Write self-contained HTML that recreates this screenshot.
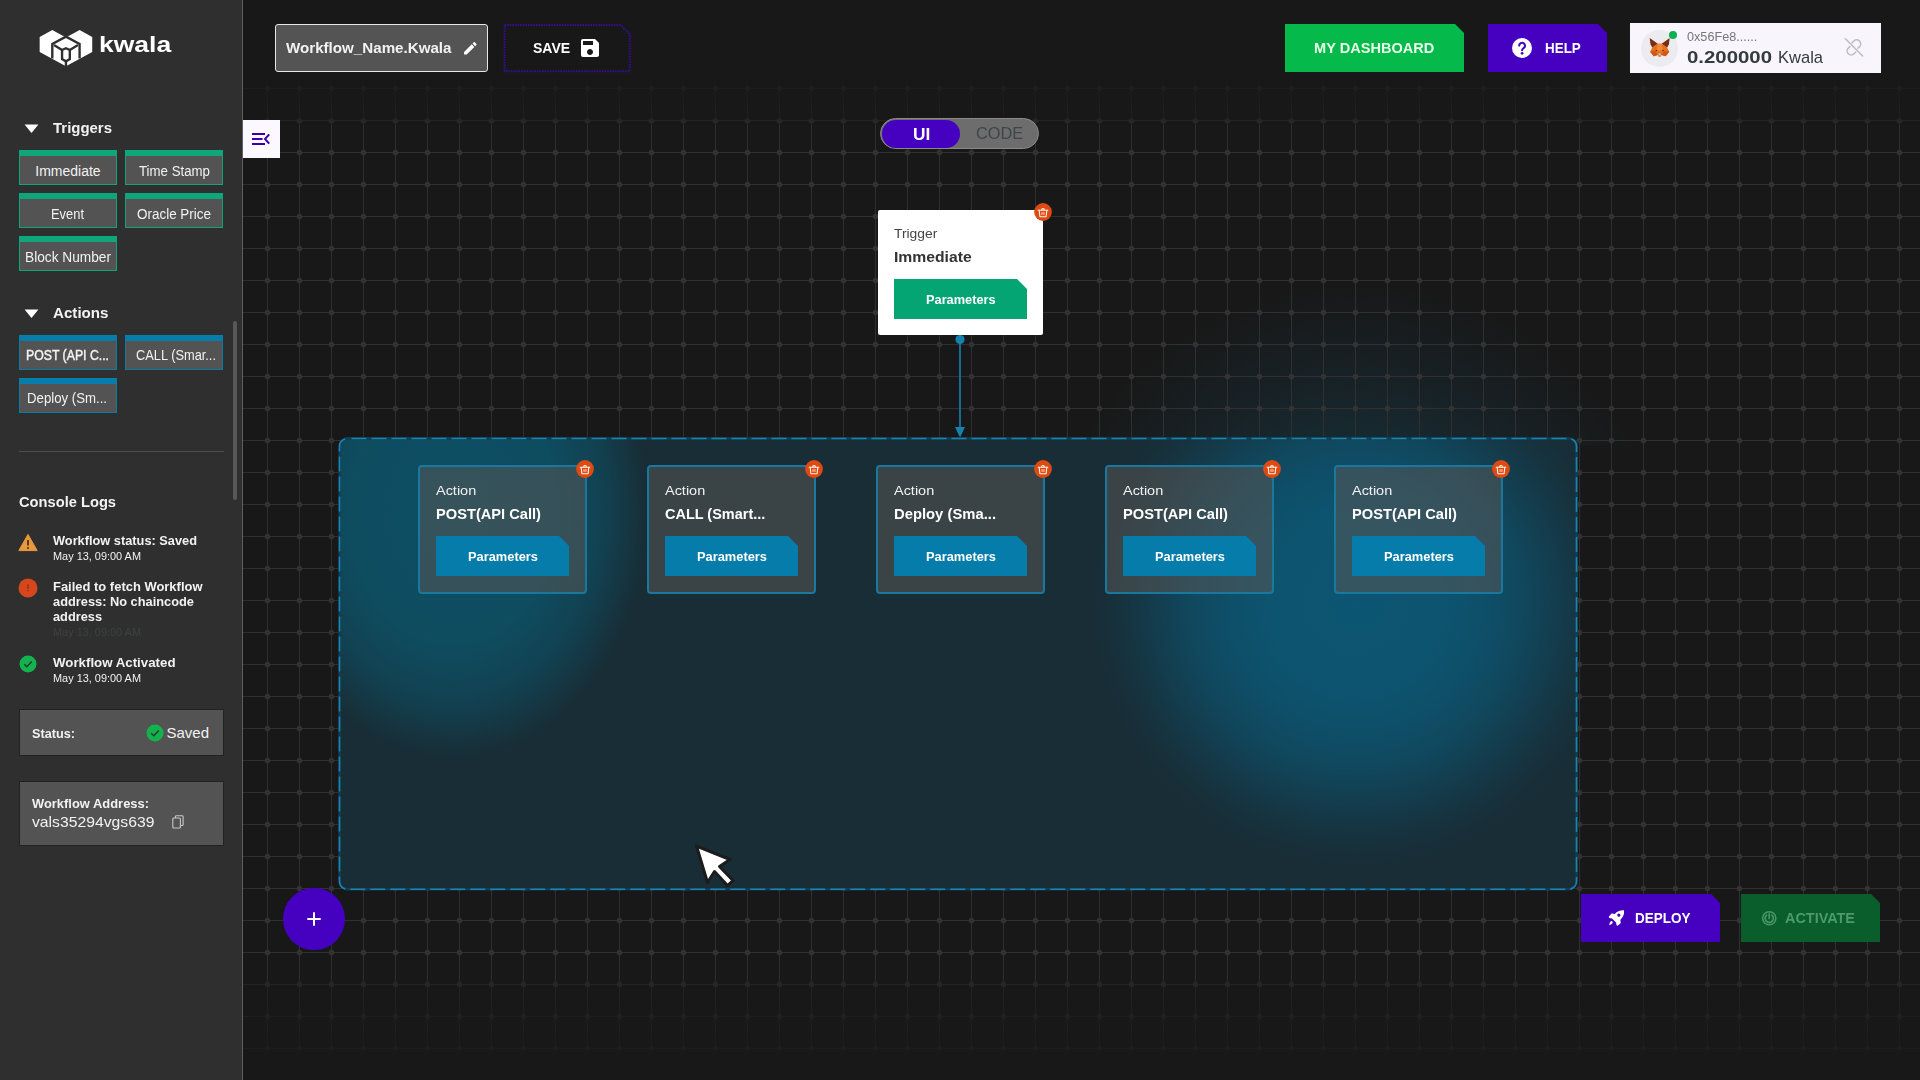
<!DOCTYPE html>
<html lang="en"><head><meta charset="utf-8"><title>Kwala Workflow Builder</title>
<style>
*{box-sizing:border-box;margin:0;padding:0}
html,body{width:1920px;height:1080px;overflow:hidden;background:#181818}
body{position:relative;font-family:"Liberation Sans",sans-serif;color:#fff}
.a{position:absolute}
.t{position:absolute;white-space:nowrap;line-height:1;transform-origin:0 50%}
#grid{left:0;top:0;width:1920px;height:1080px;
 -webkit-mask-image:linear-gradient(to bottom,transparent 72px,rgba(0,0,0,.24) 87px,rgba(0,0,0,.3) 118px,rgba(0,0,0,.6) 121px,#000 127px,#000 978px,rgba(0,0,0,.5) 983px,rgba(0,0,0,.33) 1013px,rgba(0,0,0,.24) 1046px,transparent 1064px);
 mask-image:linear-gradient(to bottom,transparent 72px,rgba(0,0,0,.24) 87px,rgba(0,0,0,.3) 118px,rgba(0,0,0,.6) 121px,#000 127px,#000 978px,rgba(0,0,0,.5) 983px,rgba(0,0,0,.33) 1013px,rgba(0,0,0,.24) 1046px,transparent 1064px)}
#side{left:0;top:0;width:243px;height:1080px;background:#2f2f2f;border-right:1px solid #606060}
.pb{position:absolute;width:98px;height:35px;background:#535353;border:1px solid #10a47b;border-top:6px solid #0fa67c}
.pb.b{border-color:#0a7aa6;border-top-color:#067dab}
.notch{clip-path:polygon(0 0,calc(100% - 9px) 0,100% 9px,100% 100%,0 100%)}
.card{position:absolute;width:168.5px;height:128.5px;top:465px;background:rgba(88,85,83,.55);border:2px solid #1a779d;border-radius:4px}
.pbtn{position:absolute;width:133px;height:40px;background:#067cab;clip-path:polygon(0 0,calc(100% - 10px) 0,100% 10px,100% 100%,0 100%)}
.del{position:absolute;width:18px;height:18px}
.sbox{position:absolute;left:19px;width:205px;background:#535353;border:1px solid #222}
</style></head><body>
<div class="a" style="left:1036px;top:285px;width:640px;height:640px;clip-path:inset(0 0 480px 0);background:radial-gradient(circle closest-side at 50% 50%,rgba(20,90,120,.4) 0,rgba(20,90,120,.3) 45%,rgba(20,90,120,.12) 75%,rgba(20,90,120,0) 100%)"></div>
<svg id="grid" class="a" width="1920" height="1080"><defs><pattern id="gp" x="-5" y="8" width="32" height="32" patternUnits="userSpaceOnUse"><path d="M16.5 0V32M0 16.5H32" stroke="#303030" stroke-width="1" fill="none"/><circle cx="16.5" cy="16.5" r="2.7" fill="#333"/></pattern></defs><rect x="243" y="0" width="1677" height="1080" fill="url(#gp)"/></svg>
<svg class="a" style="left:950px;top:330px" width="20" height="112"><circle cx="10" cy="9.5" r="4.6" fill="#1482b0"/><path d="M10 10V100" stroke="#1482b0" stroke-width="1.6"/><path d="M5 97H15L10 107.5Z" fill="#1482b0"/></svg>
<div class="a" style="left:338.5px;top:437px;width:1239px;height:452.6px;border-radius:9px;background-color:#182d36;background-image:radial-gradient(ellipse 198px 250px at 114px 74px,rgba(10,90,114,.74) 0,rgba(10,90,114,.7) 52%,rgba(10,90,114,.47) 75%,rgba(10,90,114,.2) 89%,rgba(10,90,114,.05) 96%,rgba(10,90,114,0) 100%),radial-gradient(circle at 1017px 165px,rgba(11,90,121,.9) 0,rgba(11,90,121,.86) 90px,rgba(11,90,121,.75) 130px,rgba(11,90,121,.6) 165px,rgba(11,90,121,.36) 200px,rgba(11,90,121,.14) 232px,rgba(11,90,121,.03) 255px,rgba(11,90,121,0) 270px)"></div>
<svg class="a" style="left:336px;top:434.5px" width="1244" height="459"><rect x="3.5" y="3.5" width="1237" height="450.8" rx="8" ry="8" fill="none" stroke="#0e3f56" stroke-width="2.4"/><rect x="3.5" y="3.5" width="1237" height="450.8" rx="8" ry="8" fill="none" stroke="#1d82ad" stroke-width="1.6" stroke-dasharray="15 5" stroke-dashoffset="-4"/></svg>
<div class="a" style="left:878px;top:209.5px;width:165px;height:125.5px;background:#fff;border-radius:2px"></div>
<div class="pbtn" style="left:894px;top:279px;background:#05a473"></div>
<svg class="del" style="left:1034px;top:202.5px" viewBox="0 0 18 18"><circle cx="9" cy="9" r="8.9" fill="#df4a14"/><g fill="none" stroke="#fff4e6" stroke-width="1.1" stroke-linecap="round" stroke-linejoin="round"><path d="M4.2 7.2h9.6"/><path d="M7.6 7a1.4 1.4 0 0 1 2.8 0"/><path d="M5.2 7.4l.7 6.4h6.2l.7-6.4"/></g><rect x="7.2" y="9.2" width="3.6" height="2.6" fill="#ffb59a" opacity=".8"/></svg>
<div class="card" style="left:418.0px"></div>
<div class="pbtn" style="left:436.0px;top:536px"></div>
<svg class="del" style="left:576.0px;top:460px" viewBox="0 0 18 18"><circle cx="9" cy="9" r="8.9" fill="#df4a14"/><g fill="none" stroke="#fff4e6" stroke-width="1.1" stroke-linecap="round" stroke-linejoin="round"><path d="M4.2 7.2h9.6"/><path d="M7.6 7a1.4 1.4 0 0 1 2.8 0"/><path d="M5.2 7.4l.7 6.4h6.2l.7-6.4"/></g><rect x="7.2" y="9.2" width="3.6" height="2.6" fill="#ffb59a" opacity=".8"/></svg>
<div class="card" style="left:647.0px"></div>
<div class="pbtn" style="left:665.0px;top:536px"></div>
<svg class="del" style="left:805.0px;top:460px" viewBox="0 0 18 18"><circle cx="9" cy="9" r="8.9" fill="#df4a14"/><g fill="none" stroke="#fff4e6" stroke-width="1.1" stroke-linecap="round" stroke-linejoin="round"><path d="M4.2 7.2h9.6"/><path d="M7.6 7a1.4 1.4 0 0 1 2.8 0"/><path d="M5.2 7.4l.7 6.4h6.2l.7-6.4"/></g><rect x="7.2" y="9.2" width="3.6" height="2.6" fill="#ffb59a" opacity=".8"/></svg>
<div class="card" style="left:876.0px"></div>
<div class="pbtn" style="left:894.0px;top:536px"></div>
<svg class="del" style="left:1034.0px;top:460px" viewBox="0 0 18 18"><circle cx="9" cy="9" r="8.9" fill="#df4a14"/><g fill="none" stroke="#fff4e6" stroke-width="1.1" stroke-linecap="round" stroke-linejoin="round"><path d="M4.2 7.2h9.6"/><path d="M7.6 7a1.4 1.4 0 0 1 2.8 0"/><path d="M5.2 7.4l.7 6.4h6.2l.7-6.4"/></g><rect x="7.2" y="9.2" width="3.6" height="2.6" fill="#ffb59a" opacity=".8"/></svg>
<div class="card" style="left:1105.0px"></div>
<div class="pbtn" style="left:1123.0px;top:536px"></div>
<svg class="del" style="left:1263.0px;top:460px" viewBox="0 0 18 18"><circle cx="9" cy="9" r="8.9" fill="#df4a14"/><g fill="none" stroke="#fff4e6" stroke-width="1.1" stroke-linecap="round" stroke-linejoin="round"><path d="M4.2 7.2h9.6"/><path d="M7.6 7a1.4 1.4 0 0 1 2.8 0"/><path d="M5.2 7.4l.7 6.4h6.2l.7-6.4"/></g><rect x="7.2" y="9.2" width="3.6" height="2.6" fill="#ffb59a" opacity=".8"/></svg>
<div class="card" style="left:1334.0px"></div>
<div class="pbtn" style="left:1352.0px;top:536px"></div>
<svg class="del" style="left:1492.0px;top:460px" viewBox="0 0 18 18"><circle cx="9" cy="9" r="8.9" fill="#df4a14"/><g fill="none" stroke="#fff4e6" stroke-width="1.1" stroke-linecap="round" stroke-linejoin="round"><path d="M4.2 7.2h9.6"/><path d="M7.6 7a1.4 1.4 0 0 1 2.8 0"/><path d="M5.2 7.4l.7 6.4h6.2l.7-6.4"/></g><rect x="7.2" y="9.2" width="3.6" height="2.6" fill="#ffb59a" opacity=".8"/></svg>
<div class="a" style="left:880px;top:118px;width:159px;height:31px;border-radius:16px;background:#6d6d6d;border:1.5px solid #8a8a8a"></div>
<div class="a" style="left:881.5px;top:119.5px;width:78.5px;height:28px;border-radius:14px;background:#4600c0"></div>
<div class="a" style="left:275px;top:24px;width:213px;height:48px;background:#545454;border:1.3px solid #e6e6e6;border-radius:3px"></div>
<svg class="a" style="left:461.6px;top:39.9px" width="16.67" height="16.67" viewBox="0 0 24 24"><path fill="#fff" d="M3 17.25V21h3.75L17.81 9.94l-3.75-3.75L3 17.25zM20.71 7.04c.39-.39.39-1.02 0-1.41l-2.34-2.34c-.39-.39-1.02-.39-1.41 0l-1.83 1.83 3.75 3.75 1.83-1.83z"/></svg>
<svg class="a" style="left:502px;top:22px" width="131" height="52"><path d="M2.6 3H118.6L127.8 12.2V49.3H2.6Z" fill="#181818" stroke="#350e94" stroke-width="2" stroke-dasharray="1.6 1"/></svg>
<svg class="a" style="left:578px;top:36px" width="24" height="24" viewBox="0 0 24 24"><path fill="#fff" d="M17 3H5c-1.11 0-2 .9-2 2v14c0 1.1.89 2 2 2h14c1.1 0 2-.9 2-2V7l-4-4zm-5 16c-1.66 0-3-1.34-3-3s1.34-3 3-3 3 1.34 3 3-1.34 3-3 3zm3-10H5V5h10v4z"/></svg>
<div class="a" style="left:243px;top:120px;width:37px;height:38px;background:#fbf8ff"></div>
<svg class="a" style="left:243px;top:120px" width="37" height="38"><g stroke="#3a00b0" stroke-width="1.8" fill="none"><path d="M9 14H22M9 19H19.5M9 24H22"/><path d="M26.2 14.3L22 19l4.2 4.7" stroke-width="2"/></g></svg>
<div class="a notch" style="left:1285px;top:24px;width:179px;height:48px;background:#05b94a"></div>
<div class="a notch" style="left:1488px;top:24px;width:119px;height:48px;background:#4600c0"></div>
<svg class="a" style="left:1511.8px;top:38px" width="20" height="20" viewBox="0 0 20 20"><circle cx="10" cy="10" r="10" fill="#fff"/><path d="M7.2 7.6a2.9 2.9 0 1 1 4.4 2.5c-1 .6-1.5 1.1-1.5 2.2" fill="none" stroke="#4600c0" stroke-width="2.1" stroke-linecap="round"/><circle cx="10.1" cy="15.3" r="1.35" fill="#4600c0"/></svg>
<div class="a" style="left:1630px;top:23px;width:251px;height:50px;background:#f8f6fc"></div>
<div class="a" style="left:1641px;top:30px;width:36.6px;height:36.6px;border-radius:50%;background:#ececf0"></div>
<svg class="a" style="left:1649px;top:38.3px" width="21.4" height="19.2" viewBox="0 0 21 19">
<path d="M.6 0L8.6 5.8 3.2 9.6 1.4 6.2Z" fill="#7a2d10"/><path d="M20.4 0L12.4 5.8 17.8 9.6 19.6 6.2Z" fill="#7a2d10"/>
<path d="M3.2 9.4L8.6 5.6H12.4L17.8 9.4 20 13.6 16.4 18 12.4 16.8 11.6 18.6H9.4L8.6 16.8 4.6 18 1 13.6Z" fill="#e4701c"/>
<path d="M8.6 5.6H12.4L13.4 11 10.5 13.4 7.6 11Z" fill="#f08a3a"/>
<path d="M1 13.6L6 12.8 8.6 16.8 4.6 18Z" fill="#d3541a"/><path d="M20 13.6L15 12.8 12.4 16.8 16.4 18Z" fill="#d3541a"/>
<path d="M9.4 15.2h2.2l.2 2.2H9.2Z" fill="#c9b9a8"/><circle cx="7.1" cy="12.5" r=".7" fill="#2a1a12"/><circle cx="13.9" cy="12.5" r=".7" fill="#2a1a12"/>
</svg>
<div class="a" style="left:1668.8px;top:30.8px;width:8.6px;height:8.6px;border-radius:50%;background:#0db052"></div>
<svg class="a" style="left:1843px;top:36px" width="22" height="23" viewBox="0 0 22 23"><g fill="none" stroke="#bdbdc2" stroke-width="1.6" stroke-linecap="round"><path d="M9.2 6.6l1.6-1.6a4 4 0 0 1 5.7 5.7l-1.6 1.6"/><path d="M12.6 16.2l-1.6 1.6a4 4 0 0 1-5.7-5.7l1.6-1.6"/><path d="M2.4 2.8L19.6 20"/></g></svg>
<div class="a" style="left:283.2px;top:888.4px;width:61.4px;height:61.4px;border-radius:50%;background:#4600c0"></div>
<svg class="a" style="left:306px;top:911px" width="16" height="16"><path d="M8 1.3V14.7M1.3 8H14.7" stroke="#fff" stroke-width="2"/></svg>
<div class="a notch" style="left:1581px;top:894px;width:139px;height:48px;background:#4600c0"></div>
<div class="a notch" style="left:1741px;top:894px;width:139px;height:48px;background:#0a5e2b"></div>
<svg class="a" style="left:1607.5px;top:909.5px" width="16.5" height="16.5" viewBox="0 0 16 16"><path fill="#fff" d="M15.6.3c.3 3.6-.9 6.7-3.6 9.2l.3 2.6c.05.4-.1.7-.4.95L9.6 15.1c-.5.4-1.2.1-1.3-.5l-.5-2.5-3.9-3.9-2.5-.5c-.6-.1-.9-.8-.5-1.3L3 3.9c.25-.3.6-.45.95-.4l2.6.3C9 1.2 12 0 15.6.3zM11.4 6.2a1.5 1.5 0 1 0-2.1-2.1 1.5 1.5 0 0 0 2.1 2.1zM1.2 14.8c.2-1.9.7-3.2 1.6-3.9.9-.6 2.2.6 1.6 1.6-.7.9-1.6 1.7-3.2 2.3z"/></svg>
<svg class="a" style="left:1761px;top:910px" width="16.5" height="16.5" viewBox="0 0 16.5 16.5"><circle cx="8.25" cy="8.25" r="6.6" fill="none" stroke="#4a9668" stroke-width="1.5"/><path d="M5.6 5.2a4.1 4.1 0 1 0 5.3 0" fill="none" stroke="#4a9668" stroke-width="1.7" stroke-linecap="round"/><path d="M8.25 3.8V8.4" stroke="#4a9668" stroke-width="1.7" stroke-linecap="round"/></svg>
<div id="side" class="a"></div>
<svg class="a" style="left:36px;top:26px" width="64" height="44" viewBox="0 0 1571 1080">
<path d="M90 270L400 100 668 248 735 212 802 248 1070 100 1380 270V640L735 988 90 640Z" fill="#fff"/>
<path d="M735 190L668 248 735 285 802 248Z" fill="#2f2f2f"/>
<g fill="none" stroke="#2f2f2f" stroke-width="58" stroke-linejoin="miter"><path d="M400 800V440L735 262 1070 440V800"/><path d="M440 468L640 588M1030 468L830 588"/><path d="M640 590L735 545 830 590V812L735 866 640 812Z"/><path d="M735 866V1000"/></g>
</svg>
<svg class="a" style="left:23.5px;top:123.5px" width="15" height="10"><path d="M.6.6H14.4L7.5 9Z" fill="#fff"/></svg>
<svg class="a" style="left:23.5px;top:308.5px" width="15" height="10"><path d="M.6.6H14.4L7.5 9Z" fill="#fff"/></svg>
<div class="pb" style="left:19px;top:150px"></div>
<div class="pb" style="left:125px;top:150px"></div>
<div class="pb" style="left:19px;top:193px"></div>
<div class="pb" style="left:125px;top:193px"></div>
<div class="pb" style="left:19px;top:236px"></div>
<div class="pb b" style="left:19px;top:335px"></div>
<div class="pb b" style="left:125px;top:335px"></div>
<div class="pb b" style="left:19px;top:378px"></div>
<div class="a" style="left:233px;top:321px;width:3.6px;height:178.5px;border-radius:2px;background:#585858"></div>
<div class="a" style="left:19px;top:450.5px;width:205px;height:1px;background:#4d4d4d"></div>
<svg class="a" style="left:18px;top:533px" width="20" height="19" viewBox="0 0 20 19"><path d="M10 1.4L19.2 17.6H.8Z" fill="#e9983c" stroke="#e9983c" stroke-width="1" stroke-linejoin="round"/><path d="M10 7v5.4" stroke="#3a3020" stroke-width="1.7"/><circle cx="10" cy="15" r="1" fill="#3a3020"/></svg>
<svg class="a" style="left:18px;top:578px" width="20" height="20" viewBox="0 0 20 20"><circle cx="10" cy="10" r="9.5" fill="#d6481c"/><path d="M10 6.2v4.6" stroke="#7a2a2a" stroke-width="1.2"/><circle cx="10" cy="12.8" r=".7" fill="#7a2a2a"/></svg>
<svg class="a" style="left:19px;top:655px" width="18" height="18" viewBox="0 0 18 18"><circle cx="9" cy="9" r="8.5" fill="#14b24e"/><path d="M5.2 9.3l2.6 2.5 5-5.2" fill="none" stroke="#1d3d2a" stroke-width="1.5"/></svg>
<div class="sbox" style="top:709px;height:47px"></div>
<svg class="a" style="left:146px;top:724px" width="18" height="18" viewBox="0 0 18 18"><circle cx="9" cy="9" r="8.5" fill="#14b24e"/><path d="M5.2 9.3l2.6 2.5 5-5.2" fill="none" stroke="#1d3d2a" stroke-width="1.5"/></svg>
<div class="sbox" style="top:781px;height:65px"></div>
<svg class="a" style="left:172px;top:814.5px" width="12" height="14" viewBox="0 0 12 14"><g fill="none" stroke="#c8c8c8" stroke-width="1.1"><rect x=".8" y="3" width="7.6" height="10" rx="1"/><path d="M3.4 3V1.6a.9.9 0 0 1 .9-.9h5.9a.9.9 0 0 1 .9.9v8a.9.9 0 0 1-.9.9H8.6"/></g></svg>
<span class="t" id="logo" style="left:99.40px;top:33.65px;font-size:22.5px;color:#fff;font-weight:700;transform:scaleX(1.1779);">kwala</span>
<span class="t" id="h_trig" style="left:53.00px;top:120.30px;font-size:15px;color:#f2f2f2;font-weight:700;transform:scaleX(0.9968);">Triggers</span>
<span class="t" id="h_act" style="left:53.00px;top:305.30px;font-size:15px;color:#f2f2f2;font-weight:700;transform:scaleX(1.0088);">Actions</span>
<span class="t" id="b_imm" style="left:35.25px;top:163.75px;font-size:14px;color:#f2f2f2;">Immediate</span>
<span class="t" id="b_ts" style="left:139.00px;top:163.75px;font-size:14px;color:#f2f2f2;transform:scaleX(0.9473);">Time Stamp</span>
<span class="t" id="b_ev" style="left:51.30px;top:206.75px;font-size:14px;color:#f2f2f2;transform:scaleX(0.9215);">Event</span>
<span class="t" id="b_or" style="left:137.00px;top:206.75px;font-size:14px;color:#f2f2f2;transform:scaleX(0.9606);">Oracle Price</span>
<span class="t" id="b_bn" style="left:25.20px;top:249.75px;font-size:14px;color:#f2f2f2;transform:scaleX(0.9781);">Block Number</span>
<span class="t" id="b_post" style="left:26.00px;top:348.45px;font-size:14px;color:#f2f2f2;transform:scaleX(0.8769);-webkit-text-stroke:.45px #f2f2f2;">POST (API C...</span>
<span class="t" id="b_call" style="left:136.00px;top:348.45px;font-size:14px;color:#f2f2f2;transform:scaleX(0.9153);">CALL (Smar...</span>
<span class="t" id="b_dep" style="left:27.00px;top:391.45px;font-size:14px;color:#f2f2f2;transform:scaleX(0.9433);">Deploy (Sm...</span>
<span class="t" id="h_con" style="left:19.00px;top:494.30px;font-size:15px;color:#f2f2f2;font-weight:700;transform:scaleX(0.9781);">Console Logs</span>
<span class="t" id="l1" style="left:53.00px;top:535.22px;font-size:12.5px;color:#f2f2f2;font-weight:700;transform:scaleX(1.0229);">Workflow status: Saved</span>
<span class="t" id="l1d" style="left:53.00px;top:550.69px;font-size:11px;color:#f2f2f2;transform:scaleX(0.9924);">May 13, 09:00 AM</span>
<span class="t" id="l2a" style="left:53.00px;top:581.22px;font-size:12.5px;color:#f2f2f2;font-weight:700;transform:scaleX(1.0365);">Failed to fetch Workflow</span>
<span class="t" id="l2b" style="left:53.00px;top:596.22px;font-size:12.5px;color:#f2f2f2;font-weight:700;transform:scaleX(1.0251);">address: No chaincode</span>
<span class="t" id="l2c" style="left:53.00px;top:611.22px;font-size:12.5px;color:#f2f2f2;font-weight:700;transform:scaleX(1.0218);">address</span>
<span class="t" id="l2d" style="left:53.00px;top:626.69px;font-size:11px;color:#3b4242;transform:scaleX(0.9924);">May 13, 09:00 AM</span>
<span class="t" id="l3" style="left:53.00px;top:657.22px;font-size:12.5px;color:#f2f2f2;font-weight:700;transform:scaleX(1.0625);">Workflow Activated</span>
<span class="t" id="l3d" style="left:53.00px;top:672.69px;font-size:11px;color:#f2f2f2;transform:scaleX(0.9924);">May 13, 09:00 AM</span>
<span class="t" id="st" style="left:32.00px;top:726.50px;font-size:13px;color:#f2f2f2;font-weight:700;transform:scaleX(0.9759);">Status:</span>
<span class="t" id="sv" style="left:166.50px;top:724.80px;font-size:15px;color:#f2f2f2;">Saved</span>
<span class="t" id="wa" style="left:32.00px;top:797.00px;font-size:13px;color:#f2f2f2;font-weight:700;transform:scaleX(0.9936);">Workflow Address:</span>
<span class="t" id="wv" style="left:32.00px;top:814.30px;font-size:15px;color:#f2f2f2;transform:scaleX(1.0491);">vals35294vgs639</span>
<span class="t" id="wf" style="left:285.50px;top:40.30px;font-size:15px;color:#f2f2f2;font-weight:700;transform:scaleX(1.0094);">Workflow_Name.Kwala</span>
<span class="t" id="save" style="left:533.00px;top:40.73px;font-size:14.5px;color:#fff;font-weight:700;transform:scaleX(0.9682);">SAVE</span>
<span class="t" id="dash" style="left:1314.40px;top:40.30px;font-size:15px;color:#e9ffe9;font-weight:700;transform:scaleX(0.9709);">MY DASHBOARD</span>
<span class="t" id="help" style="left:1544.70px;top:40.73px;font-size:14.5px;color:#fff;font-weight:700;transform:scaleX(0.9257);">HELP</span>
<span class="t" id="addr" style="left:1686.70px;top:31.14px;font-size:12px;color:#777;transform:scaleX(1.0539);">0x56Fe8......</span>
<span class="t" id="bal" style="left:1686.70px;top:48.61px;font-size:17px;color:#333b3b;font-weight:700;transform:scaleX(1.1988);">0.200000</span>
<span class="t" id="balk" style="left:1777.50px;top:48.61px;font-size:17px;color:#333b3b;transform:scaleX(0.9717);">Kwala</span>
<span class="t" id="ui" style="left:912.65px;top:126.96px;font-size:16px;color:#fff;font-weight:700;transform:scaleX(1.0813);">UI</span>
<span class="t" id="code" style="left:975.70px;top:126.26px;font-size:16px;color:#3c4747;transform:scaleX(1.0230);">CODE</span>
<span class="t" id="tc1" style="left:894.00px;top:226.70px;font-size:13px;color:#444;transform:scaleX(1.0638);">Trigger</span>
<span class="t" id="tc2" style="left:894.00px;top:249.00px;font-size:15px;color:#333;font-weight:700;transform:scaleX(1.0471);">Immediate</span>
<span class="t" id="tc3" style="left:925.70px;top:293.00px;font-size:13px;color:#fff;font-weight:700;transform:scaleX(0.9827);">Parameters</span>
<span class="t" id="c0a" style="left:436.00px;top:483.97px;font-size:13.5px;color:#f2f2f2;transform:scaleX(1.0711);">Action</span>
<span class="t" id="c0b" style="left:436.00px;top:506.30px;font-size:15px;color:#fff;font-weight:700;transform:scaleX(0.9766);">POST(API Call)</span>
<span class="t" id="c0c" style="left:467.50px;top:549.60px;font-size:13px;color:#fff;font-weight:700;transform:scaleX(0.9883);">Parameters</span>
<span class="t" id="c1a" style="left:665.00px;top:483.97px;font-size:13.5px;color:#f2f2f2;transform:scaleX(1.0711);">Action</span>
<span class="t" id="c1b" style="left:665.00px;top:506.30px;font-size:15px;color:#fff;font-weight:700;transform:scaleX(0.9653);">CALL (Smart...</span>
<span class="t" id="c1c" style="left:696.50px;top:549.60px;font-size:13px;color:#fff;font-weight:700;transform:scaleX(0.9883);">Parameters</span>
<span class="t" id="c2a" style="left:894.00px;top:483.97px;font-size:13.5px;color:#f2f2f2;transform:scaleX(1.0711);">Action</span>
<span class="t" id="c2b" style="left:894.00px;top:506.30px;font-size:15px;color:#fff;font-weight:700;transform:scaleX(0.9868);">Deploy (Sma...</span>
<span class="t" id="c2c" style="left:925.50px;top:549.60px;font-size:13px;color:#fff;font-weight:700;transform:scaleX(0.9883);">Parameters</span>
<span class="t" id="c3a" style="left:1123.00px;top:483.97px;font-size:13.5px;color:#f2f2f2;transform:scaleX(1.0711);">Action</span>
<span class="t" id="c3b" style="left:1123.00px;top:506.30px;font-size:15px;color:#fff;font-weight:700;transform:scaleX(0.9766);">POST(API Call)</span>
<span class="t" id="c3c" style="left:1154.50px;top:549.60px;font-size:13px;color:#fff;font-weight:700;transform:scaleX(0.9883);">Parameters</span>
<span class="t" id="c4a" style="left:1352.00px;top:483.97px;font-size:13.5px;color:#f2f2f2;transform:scaleX(1.0711);">Action</span>
<span class="t" id="c4b" style="left:1352.00px;top:506.30px;font-size:15px;color:#fff;font-weight:700;transform:scaleX(0.9766);">POST(API Call)</span>
<span class="t" id="c4c" style="left:1383.50px;top:549.60px;font-size:13px;color:#fff;font-weight:700;transform:scaleX(0.9883);">Parameters</span>
<span class="t" id="dep" style="left:1635.00px;top:911.23px;font-size:14.5px;color:#fff;font-weight:700;transform:scaleX(0.9308);">DEPLOY</span>
<span class="t" id="actv" style="left:1785.20px;top:911.23px;font-size:14.5px;color:#4c9a6b;font-weight:700;transform:scaleX(0.9949);">ACTIVATE</span>
<svg class="a" style="left:690px;top:838px" width="54" height="54" viewBox="0 0 54 54"><path d="M6.5 8L40 21.5 29.5 28.5 43 42.5 37.5 47.5 24.5 33.5 17.5 44.5Z" fill="#fff" stroke="#1c1c1c" stroke-width="3" stroke-linejoin="round"/></svg>
</body></html>
